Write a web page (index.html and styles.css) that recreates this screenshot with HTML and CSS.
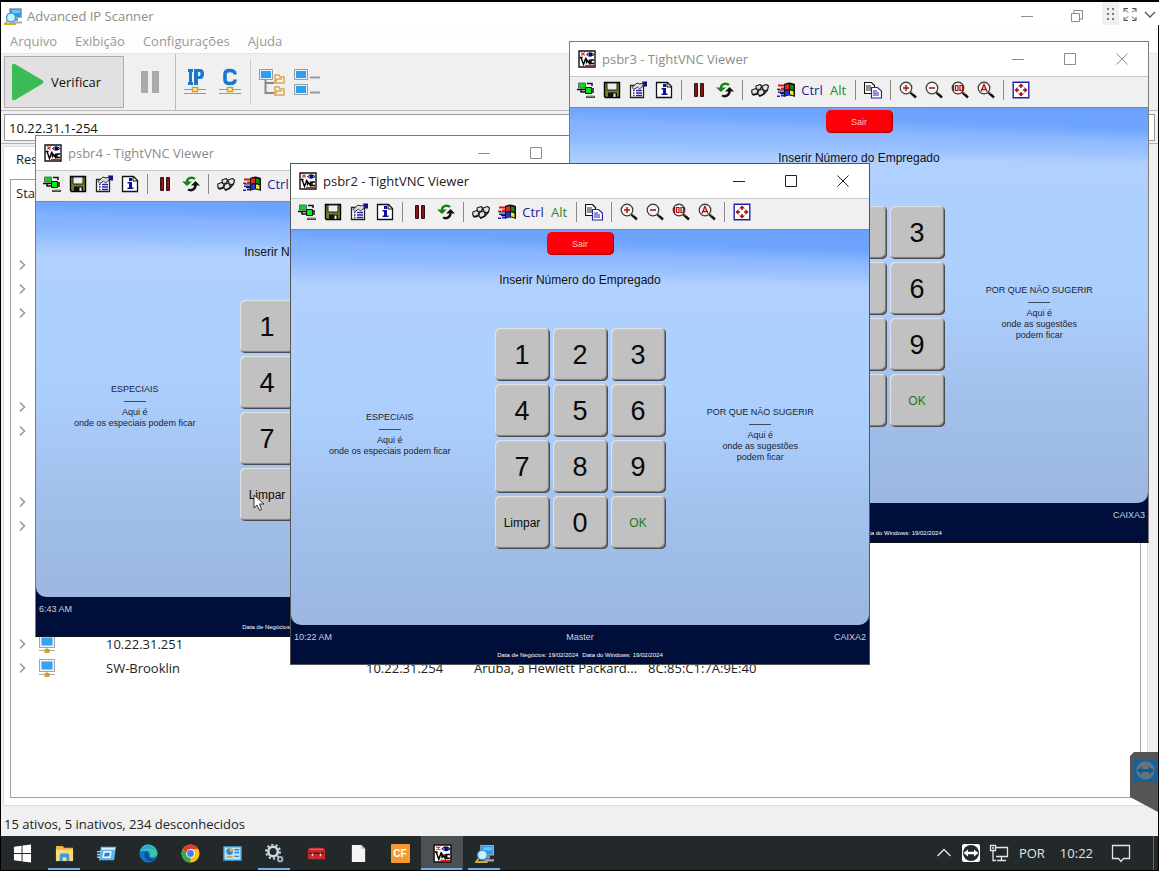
FILE: index.html
```html
<!DOCTYPE html>
<html lang="pt">
<head>
<meta charset="utf-8">
<title>Advanced IP Scanner</title>
<link rel="stylesheet" href="styles.css">
</head>
<body>
<svg class="sprite" aria-hidden="true">
  <symbol id="vnc" viewBox="0 0 18 18">
    <path d="M1 1h16v16H1z" fill="#fff" stroke="#111" stroke-width="1.4"/>
    <path d="M3 2.500l4 3M7 2.500l-4 3M5 2.500v3" stroke="#d22" stroke-width="1"/>
    <path d="M8.500 4.500q3.500-3.500 7.500 0q-4 3.500-7.500 0z" fill="#99f" stroke="#114" stroke-width="1"/>
    <path d="M11 3h3v3h-3z" fill="#007"/>
    <path d="M1.500 7.500h3M3 7.500l2.500 7L8 7.500M8.500 13.500V9.500l3 4v-4M16 10h-3v3.500h3" fill="none" stroke="#000" stroke-width="1.400"/>
    <path d="M7 15.500h9" stroke="#e11" stroke-width="1.300"/>
  </symbol>
  <symbol id="new" viewBox="0 0 18 18">
    <path d="M1.500 2h7v5h-7z" fill="#0d1" stroke="#667"/><path d="M0 8.500h8M10 2.500h5V5" fill="none" stroke="#111" stroke-width="1.500"/>
    <path d="M8.500 6.500h6v6h-6z" fill="#0e1" stroke="#111"/><path d="M4 8v3h4M9 16h9M16 7v5" fill="none" stroke="#111" stroke-width="1.500"/><path d="M10 14h7v1.500h-7z" fill="#bbb"/>
  </symbol>
  <symbol id="save" viewBox="0 0 18 18">
    <path d="M1.500 1.500h15v15h-14l-1-1z" fill="#7b7b2a" stroke="#000" stroke-width="1.400"/><path d="M4 2h10v7H4z" fill="#eee" stroke="#222"/><path d="M5 11.500h9V16H5z" fill="#111"/><path d="M10.500 12.500h2V16h-2z" fill="#eee"/>
  </symbol>
  <symbol id="props" viewBox="0 0 18 18">
    <path d="M1.500 4.500h13v12h-13z" fill="#fff" stroke="#222" stroke-width="1.300"/><path d="M4 9.500h1.500M7 9.500h6M4 12h1.500M7 12h6M4 14.500h1.500M7 14.500h6" stroke="#22a" stroke-width="1.300"/><path d="M3 6.500l5-4.500 3 1 3-1v3l-3.500 3-2-2L5 8.500z" fill="#ddd" stroke="#333"/><path d="M13 .5h5v5h-3z" fill="#118"/>
  </symbol>
  <symbol id="info" viewBox="0 0 18 18">
    <path d="M1.500 1.500h11l4 4v11h-15z" fill="#fff" stroke="#111" stroke-width="1.300"/><path d="M12 1v5h5" fill="none" stroke="#111"/><path d="M8 3h3v3H8zM6.500 7H11v5.500h1.500V14H6.500v-1.500H8v-4H6.500z" fill="#119"/>
  </symbol>
  <symbol id="pause" viewBox="0 0 18 18"><path d="M4.500 2.500h3v13h-3zM10.500 2.500h3v13h-3z" fill="#8c1111" stroke="#311"/></symbol>
  <symbol id="refresh" viewBox="0 0 18 18">
    <path d="M13 4c-2-2-8-2-8 3" fill="none" stroke="#178217" stroke-width="2.400"/><path d="M0 6.500h10L5 11z" fill="#178217"/>
    <path d="M6 14.500c3 1.500 7.500.5 7.500-4.500" fill="none" stroke="#111" stroke-width="2.400"/><path d="M9 10.500h9L13.500 6z" fill="#111"/>
  </symbol>
  <symbol id="keys" viewBox="0 0 18 18">
    <g fill="#e4e4e4" stroke="#222" stroke-width="1.200" stroke-linejoin="round"><path d="M5 5l4-1.500 1.500 1.500-1 3-4 .5zM11 5l4.500-1.500L17.500 5l-1 4-4 1zM.8 9l4-1.500L7 9l-1 3.500-4 1L.8 12zM7.500 9.500l4-1.500 2 1.500-1 4-4 1.500-1.500-2z"/></g><path d="M1 12.500l1.500 1.500 4-1M8 14l1 1 4-2 3.500-4" fill="none" stroke="#111" stroke-width="1.500"/>
  </symbol>
  <symbol id="win" viewBox="0 0 18 18">
    <path d="M7 3q5-3 11 0v13q-6-3-11 0z" fill="#111"/><path d="M8 4q2-1 4-.8V8q-2-.3-4 .8z" fill="#e22"/><path d="M13 3.500q2 0 3.500 1v4.500q-2-1-3.500-1z" fill="#181"/><path d="M8 10q2-1 4-.8V14q-2-.3-4 .8z" fill="#23d"/><path d="M13 9.500q2 0 3.500 1v4q-2-1-3.500-1z" fill="#ee2"/><path d="M1 3.500h6v2H1zM0 7.500h3v1.500H0zM4 6.500h3v2H4z" fill="#d11"/><path d="M1 10.500h6v1.500H1zM0 14.500h3V16H0zM4 13.500h3v2H4z" fill="#22b"/><path d="M1 9h6M3 12.500h4" stroke="#111"/>
  </symbol>
  <symbol id="copy" viewBox="0 0 18 18">
    <path d="M.5 1.500h7l3 3v8H.5z" fill="#fff" stroke="#111" stroke-width="1.200"/><path d="M2 5h5M2 7h6M2 9h6" stroke="#222"/><path d="M7.500 6.500h6l4 3.500v7h-10z" fill="#fff" stroke="#22a" stroke-width="1.200"/><path d="M9 10h4M9 12h6M9 14h6" stroke="#229"/>
  </symbol>
  <symbol id="lens" viewBox="0 0 18 18">
    <circle cx="7" cy="7" r="5.800" fill="#f4f4f4" stroke="#333" stroke-width="1.200"/><path d="M11.500 11.500l5.500 5" stroke="#111" stroke-width="2.400"/><path d="M12.500 11l2 2" stroke="#cc3" stroke-width="1"/>
  </symbol>
  <symbol id="zin" viewBox="0 0 18 18"><use href="#lens"/><path d="M4 7h6M7 4v6" stroke="#a11" stroke-width="1.500"/></symbol>
  <symbol id="zout" viewBox="0 0 18 18"><use href="#lens"/><path d="M4 7h6" stroke="#a11" stroke-width="1.500"/></symbol>
  <symbol id="z100" viewBox="0 0 18 18"><use href="#lens"/><path d="M2.500 4v6M4.500 4.500H7v5H4.500zM9 4.500h2.500v5H9z" fill="none" stroke="#a11" stroke-width="1.200"/></symbol>
  <symbol id="zauto" viewBox="0 0 18 18"><use href="#lens"/><path d="M4 10.500L7 3.500l3 7M5 8.500h4" fill="none" stroke="#a11" stroke-width="1.300"/></symbol>
  <symbol id="full" viewBox="0 0 18 18">
    <path d="M1.200 1.200h15.600v15.600H1.200z" fill="#fff" stroke="#22a" stroke-width="1.400"/><path d="M9 2.500l3 3H6zM9 15.500l3-3H6zM2.500 9l3-3v6zM15.500 9l-3-3v6z" fill="#911"/><path d="M9 5v2M9 11v2M5 9h2M11 9h2" stroke="#911" stroke-width="1.500"/>
  </symbol>
  <symbol id="scanner" viewBox="0 0 18 18">
    <path d="M5.500 1.500h12v9h-12z" fill="#2f9ae8" stroke="#a5b0ba"/><path d="M8 3h8v3H8z" fill="#6cc4f7"/><path d="M11 11h3v3h-3z" fill="#999"/><path d="M9 14.500h9v2H9z" fill="#aaa"/><path d="M4 13l-3 4h11" stroke="#d3ab2c" stroke-width="1.800" fill="none"/><circle cx="7" cy="10.500" r="4.500" fill="#cdeefd" stroke="#3a9ae0" stroke-width="1.300"/>
  </symbol>
  <symbol id="host" viewBox="0 0 18 20">
    <path d="M1.500 1.500h15v12h-15z" fill="#eef4f8" stroke="#9aa4ac"/><path d="M3.500 3.500h11v8h-11z" fill="#33a3f2"/><path d="M1 16.500h16" stroke="#aaa"/><path d="M9 14v3" stroke="#999"/><path d="M6.500 15h5v4h-5z" fill="#d8a21b"/>
  </symbol>
  <symbol id="arrows" viewBox="0 0 20 20"><circle cx="10" cy="10" r="8" fill="var(--disc)"/><path d="M2.500 10l4.500-3.500v2.300h6V6.500l4.500 3.500-4.500 3.500v-2.300H7v2.300z" fill="var(--arrow)"/></symbol>
</svg>

<div class="desktop">
  <main class="scanner">
    <header class="titlebar">
      <svg class="i18"><use href="#scanner"/></svg>
      <h1 class="app-name">Advanced IP Scanner</h1>
      <div class="main-controls">
        <button class="ctl" aria-label="Minimizar"><svg class="i14" viewBox="0 0 14 14"><path d="M1 7.500h12"/></svg></button>
        <button class="ctl" aria-label="Restaurar"><svg class="i14" viewBox="0 0 14 14"><path d="M1.500 4.500h8v8h-8zM4 4V1.500h8.500V10H10"/></svg></button>
      </div>
    </header>
    <nav class="menu">
      <a href="#arquivo">Arquivo</a><a href="#exibicao">Exibição</a><a href="#configuracoes">Configurações</a><a href="#ajuda">Ajuda</a>
    </nav>
    <div class="tools">
      <button class="scan"><svg class="play" viewBox="0 0 34 38"><path d="M1 3q0-3 3-2l27 16q3 2 0 4L4 37q-3 1-3-2z" fill="#3dbb56"/></svg>Verificar</button>
      <button class="tool pause" aria-label="Pausar"><svg viewBox="0 0 20 24"><path d="M1 1h7v22H1zM12 1h7v22h-7z" fill="#aaa"/></svg></button>
      <span class="rule tall"></span>
      <button class="tool letter" aria-label="IP"><svg viewBox="0 0 24 28"><path d="M5 1h5v3H9v10h1v3H5v-3h1V4H5zM11 1h6q4 0 4 5t-4 5h-2v6h-4zM15 4v4h1.500q1 0 1-2t-1-2z" fill="#1877d3" fill-rule="evenodd"/><path d="M1 21.500h22M1 25.500h22" stroke="#999"/><path d="M9.500 19.500h5v4h-5z" fill="#fff2b0" stroke="#d0a020" stroke-width="1.500"/></svg></button>
      <button class="tool letter" aria-label="C"><svg viewBox="0 0 24 28"><path d="M17 6.500V6q0-3.500-5-3.500T7 6v6q0 3.500 5 3.500t5-3.500v-.500" fill="none" stroke="#1877d3" stroke-width="3.600"/><path d="M1 21.500h22M1 25.500h22" stroke="#999"/><path d="M9.500 19.500h5v4h-5z" fill="#fff2b0" stroke="#d0a020" stroke-width="1.500"/></svg></button>
      <span class="rule"></span>
      <button class="tool" aria-label="Expandir"><svg viewBox="0 0 28 28"><path d="M1.500 1.500h13v10h-13z" fill="#eef" stroke="#999"/><path d="M3 3h10v7H3z" fill="#2aa0ee"/><path d="M7.500 12v13H16M8 15h8" fill="none" stroke="#888" stroke-width="2"/><g fill="#fff3d8" stroke="#d9a55a" stroke-width="1.500"><path d="M17 7h4l1 2h4v6h-9zM17 19h4l1 2h4v6h-9zM17 15l2-4h5M17 27l2-4h5"/></g></svg></button>
      <button class="tool" aria-label="Recolher"><svg viewBox="0 0 28 28"><path d="M1.500 1.500h13v10h-13zM1.500 16.500h13v10h-13z" fill="#eef" stroke="#999"/><path d="M3 3h10v7H3zM3 18h10v7H3z" fill="#2aa0ee"/><path d="M17 9.500h10M17 24.500h10" stroke="#999" stroke-width="2"/></svg></button>
    </div>
    <div class="range"><input type="text" aria-label="Intervalo de IP" value="10.22.31.1-254"></div>
    <section class="panel">
      <button class="tab">Resultados</button>
      <div class="list">
        <table class="hosts">
          <colgroup><col class="c-chev"><col class="c-icon"><col class="c-name"><col class="c-ip"><col class="c-maker"><col></colgroup>
          <thead><tr><th colspan="6" scope="col">Status</th></tr></thead>
          <tbody id="rows"></tbody>
        </table>
      </div>
    </section>
    <footer class="status">15 ativos, 5 inativos, 234 desconhecidos</footer>
  </main>

  <footer class="taskbar">
    <button class="task start" aria-label="Iniciar"><svg viewBox="0 0 20 20"><path d="M1 3l8-1.200V9.500H1zM10 1.700L19 .5v9h-9zM1 10.500h8v7.700L1 17zM10 10.500h9v9l-9-1.200z" fill="#fff"/></svg></button>
    <button class="task open" aria-label="Explorador"><svg viewBox="0 0 20 20"><path d="M1 2h7l2 2h9v14H1z" fill="#e9b840"/><path d="M1 6h18v12H1z" fill="#fbd976"/><path d="M5 18v-6q0-2 2-2h6q2 0 2 2v6h-3v-4H8v4z" fill="#3b9bdc"/></svg></button>
    <button class="task" aria-label="Executar"><svg viewBox="0 0 20 20"><path d="M4 3h16l-2 14H2z" fill="#5db7ee"/><path d="M5 4h14v2H5z" fill="#dff2fc"/><path d="M7.500 8.500h7l-1 5.500h-7z" fill="#2a7fc0" stroke="#fff" stroke-width="1.500"/><path d="M0 8h4M0 11h3M0 14h3" stroke="#a9dcf8" stroke-width="1.500"/></svg></button>
    <button class="task" aria-label="Edge"><svg viewBox="0 0 20 20"><circle cx="10" cy="10" r="9.500" fill="#1474c9"/><path d="M1 8q2-8 9-7.500T19.500 9q0 5-5 5-4 0-3-3 0-4-4-4T1 8z" fill="#38c7a6"/><path d="M1 8q3-7 10-6 5 1 6 5-4-3-8-2-5 0-8 3z" fill="#27a7e0"/><path d="M7 8q-4 6 3 10 5 1 7-3-6 2-7-3 0-3-3-4z" fill="#0c4f9a"/></svg></button>
    <button class="task" aria-label="Chrome"><svg viewBox="0 0 20 20"><circle cx="10" cy="10" r="9.500" fill="#fbc116"/><path d="M1.800 5.300a9.500 9.500 0 0 1 16.400 0H10L6 12z" fill="#e33b2e"/><path d="M1.800 5.300l4.300 7 4 2.500L9.500 19.500A9.500 9.500 0 0 1 1.800 5.300z" fill="#2da94f"/><circle cx="10" cy="10" r="4.600" fill="#fff"/><circle cx="10" cy="10" r="3.600" fill="#3f7fe8"/></svg></button>
    <button class="task" aria-label="Painel de controle"><svg viewBox="0 0 20 20"><path d="M1 3h18v14H1z" fill="#bfe3f7" stroke="#42a1dc" stroke-width="1.500"/><circle cx="7" cy="8" r="3.500" fill="#2a86d0"/><path d="M7 8V4.500A3.500 3.500 0 0 1 10.500 8z" fill="#f5b62c"/><path d="M12 6h5M12 9h5M12 13h5" stroke="#2a86d0" stroke-width="1.500"/><path d="M4 13.500h6" stroke="#f09a22" stroke-width="2"/></svg></button>
    <button class="task open" aria-label="Serviços"><svg viewBox="0 0 20 20"><circle cx="8.500" cy="8" r="5" fill="none" stroke="#cfdde6" stroke-width="2.600"/><circle cx="8.500" cy="8" r="7.300" fill="none" stroke="#cfdde6" stroke-width="2" stroke-dasharray="2.300 2.300"/><circle cx="16" cy="16" r="2.300" fill="none" stroke="#9fb6c6" stroke-width="2"/></svg></button>
    <button class="task" aria-label="Ferramentas"><svg viewBox="0 0 20 20"><path d="M1 7q0-3 3-3h12q3 0 3 3v9H1z" fill="#c5282e"/><path d="M3 5.500h14" stroke="#f07070"/><path d="M2 9h16v1.500H2z" fill="#5c1013"/><path d="M5 10h1.500v3H5zM13.500 10H15v3h-1.500z" fill="#ddd"/></svg></button>
    <button class="task" aria-label="Documento"><svg viewBox="0 0 20 20"><path d="M3 1h10l4 4v14H3z" fill="#f4f4f4"/><path d="M13 1v4h4z" fill="#bbb"/></svg></button>
    <button class="task" aria-label="CF"><span class="cf">CF</span></button>
    <button class="task open active" aria-label="TightVNC Viewer"><svg><use href="#vnc"/></svg></button>
    <button class="task open" aria-label="Advanced IP Scanner"><svg><use href="#scanner"/></svg></button>
    <div class="tray">
      <button class="tray-btn chev-up" aria-label="Mostrar ícones ocultos"><svg viewBox="0 0 20 20"><path d="M3.500 13L10 6.500l6.500 6.500" class="line"/></svg></button>
      <button class="tray-btn tv" aria-label="TeamViewer"><svg viewBox="0 0 20 20"><rect x="1" y="1" width="18" height="18" rx="2" fill="#fff"/><use href="#arrows"/></svg></button>
      <button class="tray-btn net" aria-label="Rede"><svg viewBox="0 0 20 20"><path d="M7 4.500h11.500v9H7M12.500 14v3M8 17.500h9M1.500 2.500h5v5h-5zM4 8v9.500h3M3 5h2" class="line"/></svg></button>
      <span class="lang">POR</span>
      <time class="clock">10:22</time>
      <button class="tray-btn" aria-label="Notificações"><svg viewBox="0 0 20 20"><path d="M1.500 2.500h17v13h-6l-2.500 3-2.500-3h-6z" class="line"/></svg></button>
      <span class="peek"></span>
    </div>
  </footer>

  <div class="session-bar">
    <button class="grip" aria-label="Mover"><svg viewBox="0 0 18 22"><path d="M5 5h2v2H5zM10 5h2v2h-2zM5 10h2v2H5zM10 10h2v2h-2zM5 15h2v2H5zM10 15h2v2h-2z" fill="#777"/></svg></button>
    <button aria-label="Tela cheia"><svg viewBox="0 0 18 22"><path d="M3 9V5.500h4M3 5.500l4 4M11 5.500h4V9M15 5.500l-4 4M3 14v3.500h4M3 17.500l4-4M15 14v3.500h-4M15 17.500l-4-4" fill="none" stroke="#555"/></svg></button>
    <button class="more" aria-label="Abrir painel"><svg viewBox="0 0 18 22"><path d="M4 9l5 5 5-5" fill="none" stroke="#555" stroke-width="1.300"/></svg></button>
  </div>

  <div id="windows"></div>

  <button class="tv-tab" aria-label="Painel do TeamViewer"><svg class="tv-logo"><use href="#arrows"/></svg></button>
  <svg class="cursor" viewBox="0 0 12 18"><path d="M1 1v13l3-3 2.500 5.500 2-1L6.500 10H11z" fill="#fff" stroke="#333"/></svg>
</div>

<template id="viewer">
  <section class="win">
    <header class="win-title">
      <svg class="i18"><use href="#vnc"/></svg>
      <h2 class="win-name"></h2>
      <button class="ctl" aria-label="Minimizar"><svg class="i14" viewBox="0 0 14 14"><path d="M1 7.500h12"/></svg></button>
      <button class="ctl" aria-label="Maximizar"><svg class="i14" viewBox="0 0 14 14"><path d="M1.500 1.500h11v11h-11z"/></svg></button>
      <button class="ctl" aria-label="Fechar"><svg class="i14" viewBox="0 0 14 14"><path d="M1.500 1.500l11 11M12.500 1.500l-11 11"/></svg></button>
    </header>
    <div class="win-tools">
      <button aria-label="Nova conexão"><svg class="i18"><use href="#new"/></svg></button>
      <button aria-label="Salvar"><svg class="i18"><use href="#save"/></svg></button>
      <button aria-label="Opções"><svg class="i18"><use href="#props"/></svg></button>
      <button aria-label="Informações"><svg class="i18"><use href="#info"/></svg></button>
      <span class="sep"></span>
      <button aria-label="Pausar"><svg class="i18"><use href="#pause"/></svg></button>
      <button aria-label="Atualizar"><svg class="i18"><use href="#refresh"/></svg></button>
      <span class="sep"></span>
      <button aria-label="Ctrl-Alt-Del"><svg class="i18"><use href="#keys"/></svg></button>
      <button aria-label="Tecla Windows"><svg class="i18"><use href="#win"/></svg></button>
      <button class="k-ctrl">Ctrl</button>
      <button class="k-alt">Alt</button>
      <span class="sep"></span>
      <button aria-label="Transferir arquivos"><svg class="i18"><use href="#copy"/></svg></button>
      <span class="sep"></span>
      <button aria-label="Aumentar"><svg class="i18"><use href="#zin"/></svg></button>
      <button aria-label="Diminuir"><svg class="i18"><use href="#zout"/></svg></button>
      <button aria-label="Tamanho real"><svg class="i18"><use href="#z100"/></svg></button>
      <button aria-label="Ajustar"><svg class="i18"><use href="#zauto"/></svg></button>
      <span class="sep"></span>
      <button aria-label="Tela cheia"><svg class="i18"><use href="#full"/></svg></button>
    </div>
    <div class="pos">
      <div class="pos-body">
        <button class="exit">Sair</button>
        <p class="prompt">Inserir Número do Empregado</p>
        <div class="cols">
          <div class="promo"><p>ESPECIAIS</p><hr><p>Aqui é<br>onde os especiais podem ficar</p></div>
          <div class="keypad"></div>
          <div class="promo side"><p>POR QUE NÃO SUGERIR</p><hr><p>Aqui é<br>onde as sugestões<br>podem ficar</p></div>
        </div>
      </div>
      <footer class="pos-foot">
        <span class="pos-time"></span><span class="pos-user"></span><span class="pos-name"></span>
        <p class="dates"><span>Data de Negócios: 19/02/2024</span><span>Data do Windows: 19/02/2024</span></p>
      </footer>
    </div>
  </section>
</template>
<script src="app.js"></script>
</body>
</html>
```

FILE: styles.css
```css
* { box-sizing: border-box; }
body { margin: 0; font: 13px/18px "Open Sans", "Noto Sans", sans-serif; color: #222; background: #000; }
h1, h2, p { margin: 0; font-size: inherit; font-weight: 400; }
button { font: inherit; color: inherit; background: none; border: 0; padding: 0; margin: 0; display: flex; align-items: center; justify-content: center; }
a { color: inherit; text-decoration: none; }
svg { flex: none; display: block; }
.sprite { position: absolute; width: 0; height: 0; }
.i18 { width: 18px; height: 18px; }
.i14 { width: 14px; height: 14px; fill: none; stroke: currentColor; }

.desktop { position: relative; min-height: 100vh; padding: 2px 1px 1px; display: flex; flex-direction: column; overflow: hidden; }
.scanner { flex: 1; display: flex; flex-direction: column; background: #f0f0f0; }

.titlebar { height: 27px; padding: 0 0 0 3px; background: #fff; display: flex; align-items: center; gap: 5px; color: #8c8c8c; }
.app-name { flex: 1; }
.main-controls { display: flex; margin-right: 56px; }
.main-controls .ctl { width: 50px; height: 24px; }
.ctl { width: 52px; height: 34px; }
.menu { height: 24px; padding: 0 9px; background: #fdfdfd; display: flex; align-items: center; gap: 18px; color: #999; }

.tools { height: 58px; padding: 0 3px; display: flex; align-items: center; border-top: 1px solid #e4e4e4; border-bottom: 1px solid #bbb; }
.scan { width: 120px; height: 52px; padding-left: 6px; gap: 6px; justify-content: flex-start; background: #e1e1e1; border: 1px solid #adadad; color: #111; }
.play { width: 34px; height: 38px; }
.tool { width: 35px; height: 40px; }
.tool svg { width: 28px; height: 28px; }
.tool.pause { width: 51px; }
.tool.pause svg { width: 20px; height: 24px; }
.tool.letter svg { width: 24px; height: 28px; }
.rule { width: 1px; height: 46px; margin: 0 3px; background: #ccc; }
.rule.tall { height: 100%; margin: 0 1px 0 0; background: #bbb; }

.range { height: 33px; padding: 3px; border-bottom: 1px solid #b4b4b4; }
.range input { width: 100%; height: 27px; font: inherit; color: #111; background: #fff; border: 1px solid #9a9a9a; padding: 0 4px; }

.panel { flex: 1; margin: 2px 10px 0 2px; padding: 0 6px 7px; background: #fff; border: 1px solid #dcdcdc; display: flex; flex-direction: column; }
.tab { height: 32px; padding: 0 6px 8px; align-self: flex-start; }
.list { flex: 1; border: 1px solid #a0a0a8; }
.hosts { width: 100%; height: 500px; table-layout: fixed; border-collapse: collapse; }
.hosts th { height: 26px; padding: 0 5px; text-align: left; font-weight: 400; }
.hosts td { height: 23px; padding: 0; white-space: nowrap; line-height: 18px; }
.hosts td svg { width: 18px; height: 20px; }
.hosts .chev { width: 10px; height: 12px; margin-left: 6px; }
.c-chev { width: 27px; }
.c-icon { width: 68px; }
.c-name { width: 260px; }
.c-ip { width: 108px; }
.c-maker { width: 174px; }

.status { height: 30px; padding: 6px 3px 0; display: flex; align-items: center; }

.taskbar { height: 34px; background: #23282b; display: flex; color: #e4e4e4; }
.task { width: 42px; position: relative; }
.task svg, .cf { width: 19px; height: 19px; }
.task.open::after { content: ""; position: absolute; left: 5px; right: 5px; bottom: 0; height: 2px; background: #6fb0ee; }
.task.active { background: #4c5154; }
.task.active::after { left: 0; right: 1px; }
.cf { background: #f39a35; color: #fff; font: 700 10px/19px "Liberation Sans", sans-serif; text-align: center; border-radius: 1px; }
.tray { margin-left: auto; display: flex; align-items: center; }
.tray-btn { width: 28px; height: 34px; }
.tray-btn.chev-up { width: 26px; }
.tray-btn svg { width: 20px; height: 20px; }
.line { fill: none; stroke: #e4e4e4; stroke-width: 1.3; }
.tv { --disc: #23282b; --arrow: #fff; }
.lang { margin: 0 15px 0 6px; }
.clock { margin-right: 14px; }
.peek { width: 1px; height: 100%; margin: 0 4px 0 18px; background: #666; }

.session-bar { position: absolute; top: 2px; right: 0; height: 23px; display: flex; background: #fff; border-radius: 0 0 0 4px; }
.session-bar button { width: 22px; height: 23px; }
.session-bar .grip { width: 17px; background: #f0f0f3; }
.session-bar .more { width: 18px; }
.session-bar svg { width: 18px; height: 22px; }

/* floating viewer windows */
.win { position: absolute; width: 580px; border: 1px solid #7c7c7c; border-bottom-color: #111; background: #f0f0f0; color: #8c8c8c; }
.win.front { color: #222; border-color: #555; }
.win-title { height: 35px; padding: 0 0 1px 8px; background: #fff; border-bottom: 1px solid #c8c8c8; display: flex; align-items: center; }
.win-name { flex: 1; padding-left: 6px; }
.win-tools { height: 31px; padding: 0 3px 4px; border-bottom: 1px solid #888; display: flex; align-items: center; }
.win-tools button { width: 26px; height: 26px; }
.win-tools .k-ctrl { color: #22228f; }
.win-tools .k-alt { color: #2a8a2a; }
.sep { width: 1px; height: 20px; margin: 0 4px; background: #8a8a8a; }

.pos { background: #000f3a; font-family: "Liberation Sans", Arial, sans-serif; color: #1c2430; }
.pos-body { height: 395px; padding-top: 2px; border-radius: 0 0 10px 10px; display: flex; flex-direction: column; align-items: center;
  background:
    linear-gradient(182deg, #6aa1fd 0, #6ea4fe 20px, #8ab6fe88 34px, #b0d0fe00 60px),
    linear-gradient(#6fa5fe 0, #78abff 12px, #b0d0fe 54px, #add0ff 150px, #abcdfb 200px, #a0bfea 300px, #9cb7e1 100%); }
.exit { width: 67px; height: 23px; background: #fb0007; color: #fbc4c4; border-radius: 5px; font-size: 9px; box-shadow: inset -1px -1px 1px #a00; }
.prompt { margin-top: 16px; font-size: 12px; line-height: 18px; color: #111; }
.cols { width: 100%; margin-top: 39px; display: grid; grid-template-columns: 1fr auto 1fr; align-items: center; }
.promo { padding: 0 6px 8px 0; text-align: center; font-size: 9px; line-height: 11px; }
.promo.side { padding-right: 14px; }
.promo hr { width: 22px; margin: 6px auto 5px; border: 0; border-top: 1px solid #3c4a60; }
.keypad { display: grid; grid-template-columns: repeat(3, 55px); grid-auto-rows: 53px; gap: 3px; }
.key { background: #c1c1c1; border-radius: 5px; color: #0a0a0a; font-size: 27px; box-shadow: inset 1px 1px 1px #e2e6ec, inset -1px -1px 1px #444, inset -2px -2px 1px #888; }
.key.word { font-size: 12px; }
.key.ok { color: #1b7a1b; }
.pos-foot { height: 39px; padding: 6px 3px 0; display: grid; grid-template-columns: 1fr auto 1fr; align-content: start; color: #c9d0e2; font-size: 9px; line-height: 12px; }
.pos-name { text-align: right; }
.dates { grid-column: 1 / -1; display: flex; justify-content: center; gap: 4px; margin-top: 6px; font-size: 6px; line-height: 12px; color: #fff; }

.tv-tab { position: absolute; right: 1px; bottom: 59px; width: 28px; height: 60px; padding: 7px 0 0 4px; background: #555; align-items: flex-start; justify-content: flex-start; clip-path: polygon(4px 0, 100% 0, 100% 100%, 0 75%, 0 4px); }
.tv-logo { width: 23px; height: 23px; background: #0f64a0; --disc: #66727c; --arrow: #0f5c94; }
.cursor { position: absolute; left: 253px; top: 494px; width: 12px; height: 18px; }
```

FILE: app.js
```js
const viewers = [
  { name: "psbr4", x: 35, y: 135, time: "6:43 AM", user: "", station: "" },
  { name: "psbr3", x: 569, y: 41, time: "", user: "", station: "CAIXA3" },
  { name: "psbr2", x: 290, y: 163, time: "10:22 AM", user: "Master", station: "CAIXA2", front: true },
];
const keys = ["1", "2", "3", "4", "5", "6", "7", "8", "9", "Limpar", "0", "OK"];
const template = document.getElementById("viewer");

for (const v of viewers) {
  const win = template.content.cloneNode(true).querySelector(".win");
  win.style.left = v.x + "px";
  win.style.top = v.y + "px";
  if (v.front) win.classList.add("front");
  win.querySelector(".win-name").textContent = v.name + " - TightVNC Viewer";
  win.querySelector(".pos-time").textContent = v.time || "\u00a0";
  win.querySelector(".pos-user").textContent = v.user;
  win.querySelector(".pos-name").textContent = v.station;
  for (const k of keys) {
    const b = document.createElement("button");
    b.className = "key" + (k.length > 1 ? " word" : "") + (k === "OK" ? " ok" : "");
    b.textContent = k;
    win.querySelector(".keypad").append(b);
  }
  document.getElementById("windows").append(win);
}

/* list slots that can be expanded, and the hosts that are named */
const expandable = [2, 3, 4, 8, 9, 12, 13, 18, 19];
const hosts = {
  18: ["10.22.31.251", "", "", ""],
  19: ["SW-Brooklin", "10.22.31.254", "Aruba, a Hewlett Packard...", "8C:85:C1:7A:9E:40"],
};
const chevron = '<svg class="chev" viewBox="0 0 10 12"><path d="M3 1.500l4.500 4.500L3 10.500" fill="none" stroke="#999" stroke-width="1.600"/></svg>';
const icon = '<svg><use href="#host"/></svg>';
let html = "";
for (let i = 0; i < 20; i++) {
  const cells = hosts[i] || ["", "", "", ""];
  html += "<tr><td>" + (expandable.includes(i) ? chevron : "") + "</td><td>" + (hosts[i] ? icon : "") + "</td>" +
    cells.map((c) => "<td>" + c + "</td>").join("") + "</tr>";
}
document.getElementById("rows").innerHTML = html;
```
